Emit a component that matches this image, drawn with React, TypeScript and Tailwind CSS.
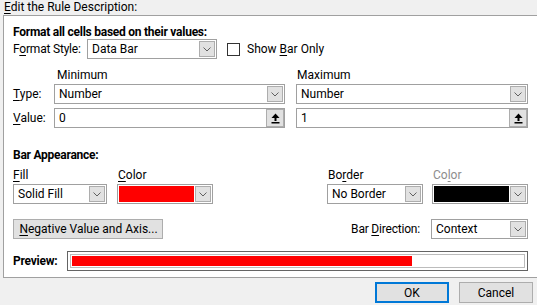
import type { ReactNode } from "react";

function U({ children }: { children: ReactNode }) {
  return <span className="underline decoration-1 underline-offset-[2px]">{children}</span>;
}

function Chevron() {
  return (
    <svg width="8" height="5" viewBox="0 0 8 5" className="block">
      <polyline points="0.5,0.5 4,4 7.5,0.5" fill="none" stroke="#606060" strokeWidth="1" />
    </svg>
  );
}

function DropButton() {
  return (
    <span className="flex h-[16px] w-[16px] shrink-0 items-center justify-center border border-[#adadad] bg-[#e1e1e1]">
      <Chevron />
    </span>
  );
}

type SelectProps = { value?: string; swatch?: string; className?: string };

function Select({ value, swatch, className = "" }: SelectProps) {
  return (
    <div
      className={`flex h-[20px] shrink-0 items-center border border-[#a0a0a0] bg-white pr-[1px] ${
        swatch ? "pl-[1px]" : "pl-[4px]"
      } ${className}`}
    >
      {swatch ? (
        <span className={`mr-[1px] h-[16px] flex-1 ${swatch}`} />
      ) : (
        <span className="flex-1 truncate">{value}</span>
      )}
      <DropButton />
    </div>
  );
}

function CollapseIcon() {
  return (
    <svg width="9" height="11" viewBox="0 0 9 11" className="block">
      <polygon points="4.5,0.5 8.5,5 0.5,5" fill="#000" />
      <rect x="3.5" y="5" width="2" height="3" fill="#000" />
      <rect x="0.5" y="9" width="8" height="1.5" fill="#000" />
    </svg>
  );
}

function RefInput({ value, className = "" }: { value: string; className?: string }) {
  return (
    <div className={`flex h-[20px] shrink-0 items-center border border-[#a0a0a0] bg-white pl-[4px] ${className}`}>
      <span className="flex-1">{value}</span>
      <span className="flex h-[18px] w-[18px] items-center justify-center border border-[#adadad] bg-[#e1e1e1]">
        <CollapseIcon />
      </span>
    </div>
  );
}

export default function App() {
  return (
    <div className="h-[305px] w-[537px] overflow-hidden bg-[#f0f0f0] font-['Roboto','Segoe_UI',sans-serif] text-[12px] leading-[16px] text-black">
      <div className="h-[15px] pl-[4px] leading-[15px]">
        <U>E</U>dit the Rule Description:
      </div>

      {/* Rule box */}
      <div className="ml-[3px] flex h-[263px] w-[545px] flex-col border border-[#a0a0a0] bg-white pl-[9px] pt-[8px]">
        <div className="flex h-[15px] items-center font-bold tracking-[-0.25px]">
          Format all cells based on their values:
        </div>

        <div className="flex h-[20px] items-center">
          <span className="w-[74px] tracking-[-0.2px]">
            F<U>o</U>rmat Style:
          </span>
          <Select value="Data Bar" className="w-[130px]" />
          <span className="ml-[10px] h-[13px] w-[13px] border border-[#333]" />
          <span className="ml-[7px]">
            Show <U>B</U>ar Only
          </span>
        </div>

        <div className="mt-[8px] flex h-[16px] items-center pl-[44px]">
          <span className="w-[240px]">Minimum</span>
          <span>Maximum</span>
        </div>

        <div className="mt-[1px] flex h-[20px] items-center">
          <span className="w-[41px]">
            <U>T</U>ype:
          </span>
          <Select value="Number" className="w-[231px]" />
          <Select value="Number" className="ml-[11px] w-[232px]" />
        </div>

        <div className="mt-[4px] flex h-[20px] items-center">
          <span className="w-[41px]">
            <U>V</U>alue:
          </span>
          <RefInput value="0" className="w-[231px]" />
          <RefInput value="1" className="ml-[11px] w-[232px]" />
        </div>

        <div className="mt-[19px] flex h-[16px] items-center font-bold tracking-[-0.25px]">Bar Appearance:</div>

        <div className="mt-[4px] flex h-[16px] items-center">
          <span className="w-[105px]">
            <U>F</U>ill
          </span>
          <span className="w-[210px]">
            <U>C</U>olor
          </span>
          <span className="w-[105px]">
            Bo<U>r</U>der
          </span>
          <span className="text-[#8d8d8d]">
            Co<U>l</U>or
          </span>
        </div>

        <div className="mt-[1px] flex h-[20px] items-center">
          <Select value="Solid Fill" className="w-[94px]" />
          <Select swatch="bg-[#ff0000]" className="ml-[10px] w-[96px]" />
          <Select value="No Border" className="ml-[114px] w-[96px]" />
          <Select swatch="bg-black" className="ml-[9px] w-[96px]" />
        </div>

        <div className="mt-[15px] flex h-[20px] items-center">
          <button className="h-[20px] w-[150px] border border-[#adadad] bg-[#e1e1e1] pl-[1px] text-center">
            <U>N</U>egative Value and Axis...
          </button>
          <span className="w-[257px] text-right tracking-[-0.2px]">
            Bar <U>D</U>irection:
          </span>
          <Select value="Context" className="ml-[11px] w-[97px]" />
        </div>

        <div className="mt-[12px] flex h-[20px] items-center">
          <span className="w-[54px] font-bold tracking-[-0.25px]">Preview:</span>
          <div className="h-[20px] w-[461px] border border-[#646464] p-[2px]">
            <div className="h-full border border-[#bcbcbc] p-[1px]">
              <div className="h-full w-[340px] bg-[#ff0000]" />
            </div>
          </div>
        </div>
      </div>

      <div className="flex justify-end gap-[10px] pr-[4px] pt-[4px]">
        <button className="h-[21px] w-[74px] border-2 border-[#0078d7] bg-[#e1e1e1]">OK</button>
        <button className="h-[21px] w-[74px] border border-[#adadad] bg-[#e1e1e1]">Cancel</button>
      </div>
    </div>
  );
}
